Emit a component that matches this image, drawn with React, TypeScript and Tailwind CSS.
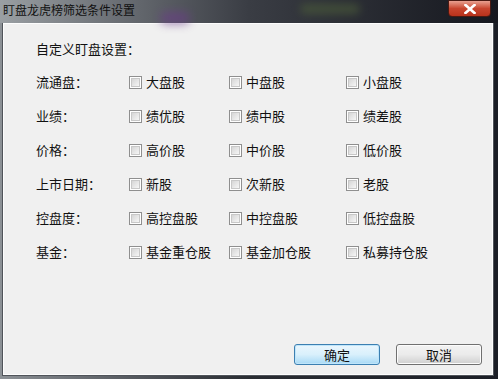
const rows: { label: string; options: string[] }[] = [
  { label: '流通盘：', options: ['大盘股', '中盘股', '小盘股'] },
  { label: '业绩：', options: ['绩优股', '绩中股', '绩差股'] },
  { label: '价格：', options: ['高价股', '中价股', '低价股'] },
  { label: '上市日期：', options: ['新股', '次新股', '老股'] },
  { label: '控盘度：', options: ['高控盘股', '中控盘股', '低控盘股'] },
  { label: '基金：', options: ['基金重仓股', '基金加仓股', '私募持仓股'] },
];

function CheckItem({ text }: { text: string }) {
  return (
    <label className="flex items-center gap-[4px]">
      <span className="w-[13px] h-[13px] border border-[#8f8f8f] bg-white p-[1px]">
        <span className="block w-full h-full bg-gradient-to-br from-[#d6d6d6] to-[#f6f6f6] border border-[#c8c8c8]" />
      </span>
      <span>{text}</span>
    </label>
  );
}

export default function App() {
  return (
    <div
      className="w-[498px] h-[379px] flex flex-col bg-gradient-to-r from-[#8c9196] via-[#2a2d33] to-[#1b1e26] text-[13px] text-[#111]"
      style={{ fontFamily: '"Noto Sans CJK SC", "Noto Sans", sans-serif' }}
    >
      {/* title bar */}
      <div className="h-[23px] flex items-start relative bg-gradient-to-r from-[#9a9fa3] via-[#3a3d44] to-[#16181f]">
        <span className="pl-[3px] pt-[2px] text-[12px] leading-[16px] text-[#111]">盯盘龙虎榜筛选条件设置</span>
        <span className="absolute left-[300px] top-[4px] w-[60px] h-[10px] rounded-full bg-[#4a5a3a] blur-[4px] opacity-70" />
        <span className="absolute left-[160px] top-[12px] w-[30px] h-[12px] rounded-full bg-[#6b3a8a] blur-[5px] opacity-60" />
        <button className="ml-auto mr-[7px] w-[43px] h-[17px] rounded-b-[4px] border border-[#4a1a12] bg-gradient-to-b from-[#e8a090] via-[#c8452e] to-[#b8321c] flex items-center justify-center">
          <svg width="12" height="10" viewBox="0 0 12 10">
            <path d="M1.5 1 L10.5 9 M10.5 1 L1.5 9" stroke="#fff" strokeWidth="2.6" strokeLinecap="square" />
          </svg>
        </button>
      </div>

      {/* client area */}
      <div className="flex-1 ml-[3px] mr-[5px] mb-[4px] border border-[#fdfdfd] bg-[#f0f0f0] flex flex-col shadow-[0_0_0_1px_#50545a]">
        <div className="pl-[32px] mt-[17px] h-[16px] leading-[16px]">自定义盯盘设置：</div>
        <div className="mt-[8px] pl-[32px] grid grid-cols-[93px_100px_117px_auto]">
          {rows.map((r) => (
            <div key={r.label} className="contents">
              <div className="h-[34px] flex items-center">{r.label}</div>
              {r.options.map((o) => (
                <div key={o} className="h-[34px] flex items-center">
                  <CheckItem text={o} />
                </div>
              ))}
            </div>
          ))}
        </div>
        <div className="mt-auto mb-[9px] mr-[10px] flex justify-end gap-[16px]">
          <button className="w-[86px] h-[21px] rounded-[3px] border border-[#3c7fb1] bg-gradient-to-b from-[#eaf6fd] via-[#d9f0fc] to-[#a7d9f5] shadow-[inset_0_0_0_1px_#bfe5fa] text-[13px] leading-[19px]">
            确定
          </button>
          <button className="w-[86px] h-[21px] rounded-[3px] border border-[#707070] bg-gradient-to-b from-[#f2f2f2] via-[#ebebeb] to-[#cfcfcf] shadow-[inset_0_0_0_1px_#fcfcfc] text-[13px] leading-[19px]">
            取消
          </button>
        </div>
      </div>
    </div>
  );
}
